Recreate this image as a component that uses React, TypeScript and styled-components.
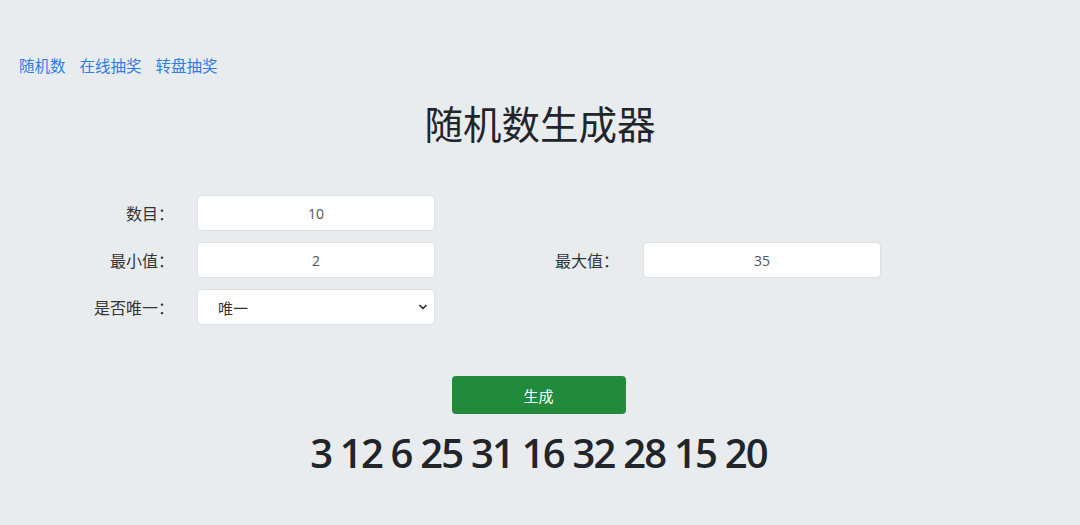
import { useState } from "react";
import styled, { createGlobalStyle } from "styled-components";
import { ChevronDown } from "lucide-react";

const GlobalStyle = createGlobalStyle`
  html, body {
    margin: 0;
    padding: 0;
    background: #e9ecef;
    font-family: "Noto Sans CJK SC", "Open Sans", sans-serif;
    color: #212529;
  }
`;

const Page = styled.div`
  min-height: 525px;
`;

const Nav = styled.nav`
  display: flex;
  gap: 14px;
  padding: 53px 0 0 19px;
  font-size: 15.5px;
  line-height: 24px;
`;

const NavLink = styled.a`
  color: #2b7de9;
  text-decoration: none;
  cursor: pointer;
`;

const Title = styled.h1`
  margin: 22px 0 0;
  text-align: center;
  font-size: 38.5px;
  font-weight: 400;
  line-height: 1.2;
  color: #212529;
`;

const Form = styled.div`
  margin-top: 50px;
  display: grid;
  grid-template-columns: 197px 238px 208px 238px;
  row-gap: 11px;
`;

const Label = styled.label<{ $gap: number }>`
  font-size: 16px;
  line-height: 36px;
  text-align: right;
  padding-right: ${(p) => p.$gap}px;
  color: #333;
  white-space: nowrap;
`;

const Input = styled.input`
  box-sizing: border-box;
  width: 100%;
  height: 36px;
  border: 1px solid #dde1e5;
  border-radius: 4px;
  background: #fff;
  text-align: center;
  font-family: "Open Sans", "Noto Sans CJK SC", sans-serif;
  font-size: 14px;
  color: #555;
  outline: none;
`;

const SelectWrap = styled.div`
  position: relative;
  height: 36px;
`;

const Select = styled.select`
  box-sizing: border-box;
  width: 100%;
  height: 36px;
  appearance: none;
  border: 1px solid #dde1e5;
  border-radius: 4px;
  background: #fff;
  padding: 0 0 0 20px;
  font-family: "Noto Sans CJK SC", sans-serif;
  font-size: 15px;
  color: #333;
  outline: none;
`;

const Caret = styled.span`
  position: absolute;
  right: 6px;
  top: 12px;
  display: flex;
  pointer-events: none;
  color: #333;
`;

const Actions = styled.div`
  display: flex;
  justify-content: center;
  margin-top: 51px;
  padding-right: 3px;
`;

const Button = styled.button`
  width: 174px;
  height: 38px;
  border: none;
  border-radius: 4px;
  background: #228a3b;
  color: #fff;
  font-family: "Noto Sans CJK SC", sans-serif;
  font-size: 15px;
  cursor: pointer;
`;

const Result = styled.div`
  margin-top: 15px;
  padding-right: 3px;
  text-align: center;
  font-family: "Open Sans", sans-serif;
  font-weight: 600;
  font-size: 40px;
  line-height: 1.2;
  letter-spacing: -1.8px;
  color: #212529;
`;

export default function App() {
  const [count, setCount] = useState("10");
  const [min, setMin] = useState("2");
  const [max, setMax] = useState("35");
  const [unique, setUnique] = useState("1");
  const [nums, setNums] = useState([3, 12, 6, 25, 31, 16, 32, 28, 15, 20]);

  const generate = () => {
    const n = parseInt(count) || 0;
    const lo = parseInt(min) || 0;
    const hi = parseInt(max) || 0;
    const out: number[] = [];
    let guard = 0;
    while (out.length < n && guard < 10000) {
      guard++;
      const v = lo + Math.floor(Math.random() * (hi - lo + 1));
      if (unique === "1" && out.includes(v)) continue;
      out.push(v);
    }
    setNums(out);
  };

  return (
    <Page>
      <GlobalStyle />
      <Nav>
        <NavLink>随机数</NavLink>
        <NavLink>在线抽奖</NavLink>
        <NavLink>转盘抽奖</NavLink>
      </Nav>
      <Title>随机数生成器</Title>
      <Form>
        <Label $gap={23}>数目：</Label>
        <Input value={count} onChange={(e) => setCount(e.target.value)} />
        <span />
        <span />

        <Label $gap={23}>最小值：</Label>
        <Input value={min} onChange={(e) => setMin(e.target.value)} />
        <Label $gap={24}>最大值：</Label>
        <Input value={max} onChange={(e) => setMax(e.target.value)} />

        <Label $gap={23}>是否唯一：</Label>
        <SelectWrap>
          <Select value={unique} onChange={(e) => setUnique(e.target.value)}>
            <option value="1">唯一</option>
            <option value="0">不唯一</option>
          </Select>
          <Caret>
            <ChevronDown size={12} strokeWidth={3.5} />
          </Caret>
        </SelectWrap>
      </Form>
      <Actions>
        <Button onClick={generate}>生成</Button>
      </Actions>
      <Result>{nums.join(" ")}</Result>
    </Page>
  );
}
